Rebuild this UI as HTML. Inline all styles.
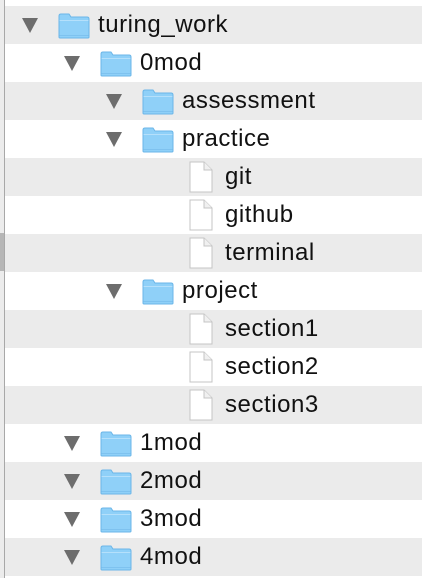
<!DOCTYPE html>
<html><head><style>
body{margin:0;width:422px;height:578px;overflow:hidden;background:#fff;position:relative;font-family:"Helvetica Neue","Liberation Sans",Arial,sans-serif;}
.row{position:absolute;left:0;width:422px;height:38px;}
.g{background:#ebebeb;}
.lb{position:absolute;left:0;top:0;width:4px;height:578px;background:#ececec;}
.lb2{position:absolute;left:4px;top:0;width:1px;height:578px;background:#a8a8a8;}
.sc{position:absolute;left:0;top:233px;width:4px;height:38px;background:#b6b6b6;}
.t{position:absolute;font-size:24px;letter-spacing:0.55px;color:#111;line-height:38px;}
.tri{position:absolute;width:0;height:0;border-left:8.5px solid transparent;border-right:8.5px solid transparent;border-top:15px solid #6d6d6d;}
svg{position:absolute;}
</style></head><body>
<div class="row g" style="top:6px"></div>
<div class="row g" style="top:82px"></div>
<div class="row g" style="top:158px"></div>
<div class="row g" style="top:234px"></div>
<div class="row g" style="top:310px"></div>
<div class="row g" style="top:386px"></div>
<div class="row g" style="top:462px"></div>
<div class="row g" style="top:538px"></div>
<div class="lb"></div><div class="sc"></div><div class="lb2"></div>

<div id="c"></div>
<script>
var rows=[
[0,'f','turing_work',1],[1,'f','0mod',1],[2,'f','assessment',1],[2,'f','practice',1],
[3,'d','git'],[3,'d','github'],[3,'d','terminal'],[2,'f','project',1],
[3,'d','section1'],[3,'d','section2'],[3,'d','section3'],
[1,'f','1mod',1],[1,'f','2mod',1],[1,'f','3mod',1],[1,'f','4mod',1]];
var h='';
rows.forEach(function(r,i){
 var top=6+i*38, off=r[0]*42;
 if(r[1]=='f'){
  var tx=22+off;
  h+='<div class="tri" style="left:'+tx+'px;top:'+(top+12)+'px"></div>';
  var fx=58+off;
  h+='<svg style="left:'+fx+'px;top:'+(top+7)+'px" width="32" height="26" viewBox="0 0 32 26"><path d="M1 3 Q1 1 3 1 L11 1 L13 4 L29 4 Q31 4 31 6 L31 24 Q31 25 30 25 L2 25 Q1 25 1 24 Z" fill="#8fd0f8" stroke="#6bb6e8" stroke-width="1"/><rect x="1.5" y="7" width="29" height="1" fill="#b5e0fb"/><rect x="1.5" y="22" width="29" height="1" fill="#7ec2ef"/></svg>';
  h+='<div class="t" style="left:'+(98+off)+'px;top:'+top+'px">'+r[2]+'</div>';
 } else {
  var fx=189;
  h+='<svg style="left:'+fx+'px;top:'+(top+3)+'px" width="24" height="32" viewBox="0 0 24 32"><path d="M1 1 L15 1 L23 9 L23 31 L1 31 Z" fill="#fff" stroke="#c4c4c4" stroke-width="1"/><path d="M15 1 L15 9 L23 9" fill="#f0f0f0" stroke="#c4c4c4" stroke-width="1"/></svg>';
  h+='<div class="t" style="left:225px;top:'+top+'px">'+r[2]+'</div>';
 }
});
document.getElementById('c').innerHTML=h;
</script>
</body></html>
